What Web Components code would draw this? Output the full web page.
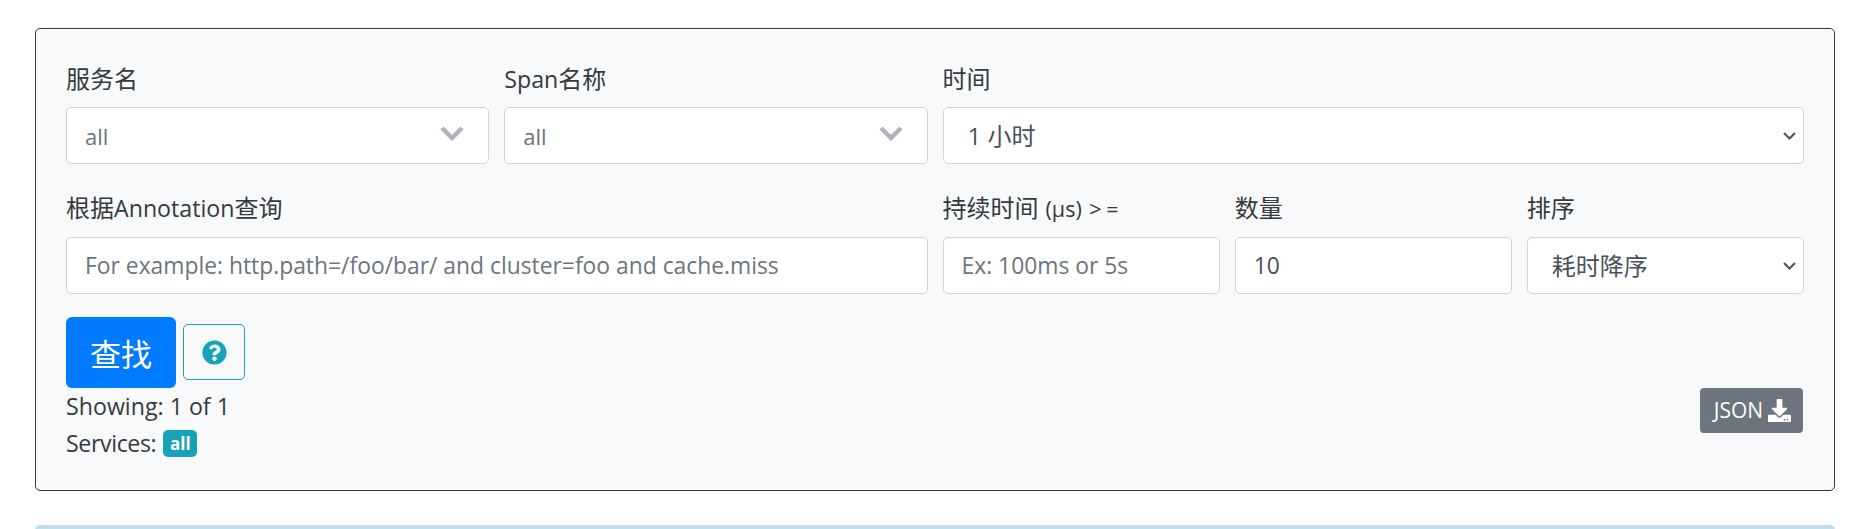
<!DOCTYPE html>
<html lang="zh"><head><meta charset="utf-8"><title>Search</title>
<style>
html,body{margin:0;padding:0;background:#fff;overflow:hidden;height:529px}
body{font-family:"Open Sans","Noto Sans CJK SC",sans-serif;color:#343a40;font-size:23.2px}
search-page{display:block;padding:28px 36px 0 35px;height:501px;overflow:hidden}
</style></head><body>
<search-page></search-page>
<script>
const SANS='"Open Sans","Noto Sans CJK SC",sans-serif';
const wrapCJK=s=>s.replace(/[\u4e00-\u9fff]+/g,m=>`<span class="cjk">${m}</span>`);
class FField extends HTMLElement{
  constructor(){super();this.attachShadow({mode:'open'}).innerHTML=`<style>
  :host{display:flex;flex-direction:column;min-width:0;grid-column:span var(--span,3)}
  label{display:block;height:29px;margin-bottom:10.2px;font:23.2px/22px ${SANS};color:#343a40;white-space:nowrap}
  .cjk{font-size:24px}
  </style><label>${wrapCJK(this.getAttribute('label')||'')}<slot name="sub"></slot></label><slot></slot>`;
  this.style.setProperty('--span',this.getAttribute('span')||3);}
}
customElements.define('f-field',FField);

class FCombo extends HTMLElement{
  constructor(){super();this.attachShadow({mode:'open'}).innerHTML=`<style>
  :host{display:flex;align-items:center;justify-content:space-between;height:57px;box-sizing:border-box;background:#fff;border:1px solid #ced4da;border-radius:5px;padding:2px 24px 0 18px;color:#6c757d;font:22px/1 ${SANS}}
  svg{width:24px;height:15px;display:block;margin-top:-5px}
  </style><span><slot></slot></span><svg viewBox="0 0 24 15"><path d="M2 2l10 10L22 2" fill="none" stroke="#adb3b9" stroke-width="4.4"/></svg>`;}
}
customElements.define('f-combo',FCombo);

class FSelect extends HTMLElement{
  constructor(){super();this.attachShadow({mode:'open'}).innerHTML=`<style>
  :host{display:block;position:relative;height:57px}
  select{appearance:none;-webkit-appearance:none;width:100%;height:100%;box-sizing:border-box;background:#fff;border:1px solid #ced4da;border-radius:5px;padding:1px 40px 0 24px;color:#495057;font:24px ${SANS};outline:0}
  svg{position:absolute;right:8px;top:25px;width:13px;height:8px;pointer-events:none}
  </style><select><option>${this.getAttribute('value')}</option></select><svg viewBox="0 0 13 8"><path d="M1 1l5.5 5.5L12 1" fill="none" stroke="#495057" stroke-width="2"/></svg>`;}
}
customElements.define('f-select',FSelect);

class FInput extends HTMLElement{
  constructor(){super();const v=this.getAttribute('value'),p=this.getAttribute('placeholder');
  this.attachShadow({mode:'open'}).innerHTML=`<style>
  :host{display:block;height:57px}
  input{width:100%;height:100%;box-sizing:border-box;background:#fff;border:1px solid #ced4da;border-radius:5px;padding:1px 18px 0;color:#495057;font:22.85px ${SANS};outline:0}
  input::placeholder{color:#6c757d;opacity:1}
  </style><input ${v?`value="${v}"`:''} ${p?`placeholder="${p}"`:''}>`;}
}
customElements.define('f-input',FInput);

class FIcon extends HTMLElement{
  constructor(){super();const P={
   q:'M504 256c0 136.997-111.043 248-248 248S8 392.997 8 256C8 119.083 119.043 8 256 8s248 111.083 248 248zM262.655 90c-54.497 0-89.255 22.957-116.549 63.758-3.536 5.286-2.353 12.415 2.715 16.258l34.699 26.31c5.205 3.947 12.621 3.008 16.665-2.122 17.864-22.658 30.113-35.797 57.303-35.797 20.429 0 45.698 13.148 45.698 32.958 0 14.976-12.363 22.667-32.534 33.976C247.128 238.528 216 254.941 216 296v4c0 6.627 5.373 12 12 12h56c6.627 0 12-5.373 12-12v-1.333c0-28.462 83.186-29.647 83.186-106.667 0-58.002-60.165-102-116.531-102zM256 338c-25.365 0-46 20.635-46 46 0 25.364 20.635 46 46 46s46-20.636 46-46c0-25.365-20.635-46-46-46z',
   d:'M216 0h80c13.3 0 24 10.7 24 24v168h87.7c17.8 0 26.7 21.5 14.1 34.1L269.7 378.3c-7.5 7.5-19.8 7.5-27.3 0L90.1 226.1c-12.6-12.6-3.7-34.1 14.1-34.1H192V24c0-13.3 10.7-24 24-24zm296 376v112c0 13.3-10.7 24-24 24H24c-13.3 0-24-10.7-24-24V376c0-13.3 10.7-24 24-24h146.7l49 49c20.1 20.1 52.5 20.1 72.6 0l49-49H488c13.3 0 24 10.7 24 24zm-124 88c0-11-9-20-20-20s-20 9-20 20 9 20 20 20 20-9 20-20zm64 0c0-11-9-20-20-20s-20 9-20 20 9 20 20 20 20-9 20-20z'};
  this.attachShadow({mode:'open'}).innerHTML=`<style>:host{display:inline-flex}svg{width:var(--s,24px);height:var(--s,24px);fill:currentColor;display:block}</style><svg viewBox="0 0 512 512"><path d="${P[this.getAttribute('name')]}"/></svg>`;}
}
customElements.define('f-icon',FIcon);

class FBtn extends HTMLElement{
  constructor(){super();this.attachShadow({mode:'open'}).innerHTML=`<style>
  :host{display:inline-flex;align-items:center;justify-content:center;box-sizing:border-box;border-radius:5px;border:1px solid transparent;font-family:${SANS}}
  :host([kind=primary]){width:110px;height:71px;background:#007bff;color:#fff;font-size:31px;border-radius:6px}
  :host([kind=help]){width:62px;height:56px;border-color:#17a2b8;color:#17a2b8;--s:25px}
  :host([kind=json]){width:103px;height:45px;margin-right:1px;padding-left:2px;background:#6c757d;color:#fff;font-size:21px;gap:5px;--s:23px;border-radius:4px}
  </style><slot></slot>`;}
}
customElements.define('f-btn',FBtn);

class FBadge extends HTMLElement{
  constructor(){super();this.attachShadow({mode:'open'}).innerHTML=`<style>
  :host{display:inline-flex;align-items:center;justify-content:center;box-sizing:border-box;width:34px;height:27px;background:#17a2b8;color:#fff;border-radius:5px;font:700 17px/1 ${SANS}}
  </style><slot></slot>`;}
}
customElements.define('f-badge',FBadge);

class SearchPage extends HTMLElement{
  constructor(){super();this.attachShadow({mode:'open'}).innerHTML=`<style>
  :host{display:block;font-family:${SANS}}
  .panel{box-sizing:border-box;height:463px;background:#f8f9fa;border:1px solid #343a40;border-radius:5px;padding:38.8px 30px 0}
  .grid{display:grid;grid-template-columns:repeat(12,minmax(0,1fr));column-gap:15px;row-gap:33.4px;margin-bottom:23.4px}
  .actions{display:flex;align-items:center;gap:7px}
  .foot{display:flex;justify-content:space-between;align-items:flex-start}
  .lines{font-size:23.2px;line-height:37px;color:#343a40}
  .lines div{height:37px;display:flex;align-items:center;gap:7px}
  .svc{letter-spacing:-.4px}
  small{font-size:21.5px;margin-left:1px;word-spacing:2px}
  small b{font-weight:400;letter-spacing:4.5px}
  .alert{box-sizing:border-box;height:60px;margin-top:34px;background:#bfdfee;border-radius:5px}
  </style>
  <div class="panel">
    <div class="grid">
      <f-field label="服务名" span="3"><f-combo>all</f-combo></f-field>
      <f-field label="Span名称" span="3"><f-combo>all</f-combo></f-field>
      <f-field label="时间" span="6"><f-select value="1 小时"></f-select></f-field>
      <f-field label="根据Annotation查询" span="6"><f-input placeholder="For example: http.path=/foo/bar/ and cluster=foo and cache.miss"></f-input></f-field>
      <f-field label="持续时间 " span="2"><small slot="sub">(μs) <b>&gt;=</b></small><f-input placeholder="Ex: 100ms or 5s"></f-input></f-field>
      <f-field label="数量" span="2"><f-input value="10"></f-input></f-field>
      <f-field label="排序" span="2"><f-select value="耗时降序"></f-select></f-field>
    </div>
    <div class="actions"><f-btn kind="primary">查找</f-btn><f-btn kind="help"><f-icon name="q"></f-icon></f-btn></div>
    <div class="foot">
      <div class="lines"><div>Showing: 1 of 1</div><div><span class="svc">Services:</span><f-badge>all</f-badge></div></div>
      <f-btn kind="json">JSON <f-icon name="d"></f-icon></f-btn>
    </div>
  </div>
  <div class="alert"></div>`;}
}
customElements.define('search-page',SearchPage);
</script>
</body></html>
